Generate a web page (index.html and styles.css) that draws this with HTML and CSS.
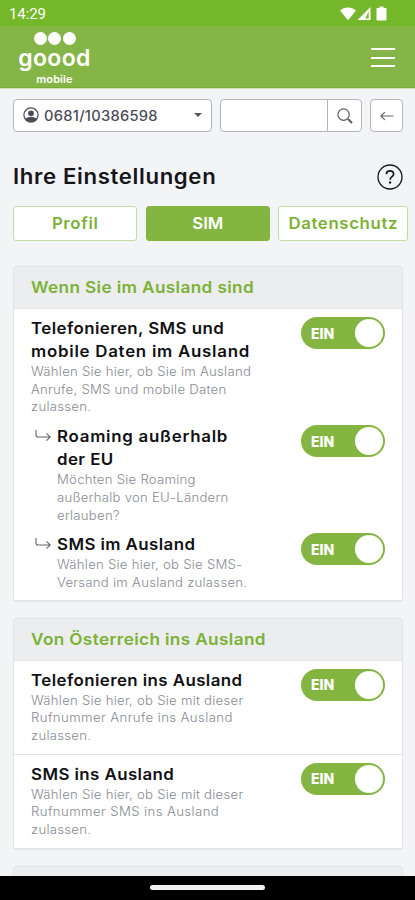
FILE: index.html
```html
<!DOCTYPE html>
<html lang="de">
<head>
<meta charset="utf-8">
<title>goood mobile – Einstellungen</title>
<link rel="stylesheet" href="styles.css">
</head>
<body>
<div class="screen">
  <div class="status">
    <span class="clock">14:29</span>
    <svg class="status-icons" width="48" height="16" viewBox="0 0 48 16" fill="#fff">
      <path d="M0 4.500C4.500.5 11.500.5 16 4.500L8 14.300Z"/>
      <path fill-rule="evenodd" d="M17.500 14 30.500 1v13ZM25.300 12.500h3.400V5.600Z"/>
      <path d="M37.500 2h2V.5h4V2h2a1 1 0 0 1 1 1v10.500a1 1 0 0 1-1 1h-8a1 1 0 0 1-1-1V3a1 1 0 0 1 1-1Z"/>
    </svg>
  </div>
  <header class="header">
    <div class="logo">
      <div class="dots"><i></i><i></i><i></i></div>
      <div class="brand">goood</div>
      <div class="sub">mobile</div>
    </div>
    <div class="menu"><i></i><i></i><i></i></div>
  </header>
  <div class="toolbar">
    <div class="number">
      <svg width="16" height="16" viewBox="0 0 16 16"><circle cx="8" cy="8" r="7.100" fill="none" stroke="#4b4b59" stroke-width="1.200"/><circle cx="8" cy="6.300" r="2.900" fill="#4b4b59"/><path d="M2.300 12.200C3.500 10.500 5.500 10.100 8 10.100s4.500.4 5.700 2.100A7 7 0 0 1 8 15.100a7 7 0 0 1-5.700-2.900Z" fill="#4b4b59"/></svg>
      <span class="msisdn">0681/10386598</span>
      <b class="caret"></b>
    </div>
    <div class="search">
      <div class="field"></div>
      <div class="go"><svg width="16" height="16" viewBox="0 0 16 16" fill="none" stroke="#5c5c66"><circle cx="6.600" cy="6.600" r="5.700" stroke-width="1.200"/><path d="m11 11 4 4" stroke-width="2"/></svg></div>
    </div>
    <div class="back"><svg width="14" height="10" viewBox="0 0 14 10" fill="none" stroke="#66666e" stroke-width="1.200" stroke-linecap="round" stroke-linejoin="round"><path d="M13 5H1M4.600 1.400 1 5l3.600 3.600"/></svg></div>
  </div>
  <div class="heading">
    <h1>Ihre Einstellungen</h1>
    <svg width="26" height="26" viewBox="0 0 26 26" fill="none" stroke="#16161a"><circle cx="13" cy="13" r="12" stroke-width="1.300"/><path d="M9.400 10.100C9.500 7.900 11 6.900 13 6.900c2.100 0 3.600 1.200 3.600 3 0 1.500-.8 2.200-1.900 3-1.200.9-1.600 1.500-1.600 2.900" stroke-width="1.700"/><circle cx="13.100" cy="18.500" r="1.200" fill="#16161a" stroke="none"/></svg>
  </div>
  <nav class="tabs">
    <div class="tab"><span>Profil</span></div>
    <div class="tab active"><span>SIM</span></div>
    <div class="tab privacy"><span>Datenschutz</span></div>
  </nav>
  <section class="card">
    <h2><span>Wenn Sie im Ausland sind</span></h2>
    <div class="group">
      <div class="row">
        <div class="text"><h3>Telefonieren, SMS und<br><span class="wide">mobile Daten im Ausland</span></h3><p>Wählen Sie hier, ob Sie im Ausland<br>Anrufe, SMS und mobile Daten<br>zulassen.</p></div>
        <div class="toggle">EIN<i></i></div>
      </div>
      <div class="row nested">
        <svg class="branch" width="16" height="12" viewBox="0 0 16 12" fill="none" stroke="#66666a" stroke-width="1.100"><path d="M1 0v5q0 2 2 2h12M11.500 3.300 15.200 7l-3.700 3.700"/></svg>
        <div class="text"><h3><span class="wide">Roaming außerhalb</span><br>der EU</h3><p>Möchten Sie Roaming<br>außerhalb von EU-Ländern<br>erlauben?</p></div>
        <div class="toggle">EIN<i></i></div>
      </div>
      <div class="row nested">
        <svg class="branch" width="16" height="12" viewBox="0 0 16 12" fill="none" stroke="#66666a" stroke-width="1.100"><path d="M1 0v5q0 2 2 2h12M11.500 3.300 15.200 7l-3.700 3.700"/></svg>
        <div class="text"><h3>SMS im Ausland</h3><p>Wählen Sie hier, ob Sie SMS-<br>Versand im Ausland zulassen.</p></div>
        <div class="toggle">EIN<i></i></div>
      </div>
    </div>
  </section>
  <section class="card">
    <h2><span>Von Österreich ins Ausland</span></h2>
    <div class="group">
      <div class="row">
        <div class="text"><h3>Telefonieren ins Ausland</h3><p>Wählen Sie hier, ob Sie mit dieser<br><span class="wide">Rufnummer Anrufe ins Ausland</span><br>zulassen.</p></div>
        <div class="toggle">EIN<i></i></div>
      </div>
    </div>
    <div class="group">
      <div class="row">
        <div class="text"><h3>SMS ins Ausland</h3><p>Wählen Sie hier, ob Sie mit dieser<br><span class="wide">Rufnummer SMS ins Ausland</span><br>zulassen.</p></div>
        <div class="toggle">EIN<i></i></div>
      </div>
    </div>
  </section>
  <section class="card"><h2></h2></section>
  <div class="navbar"><i></i></div>
</div>
</body>
</html>
```
FILE: styles.css
```css
* { box-sizing: border-box; }
html, body { margin: 0; }
body { font-family: Inter, "Open Sans", sans-serif; background: #f2f4f6; }
h1, h2, h3, p { margin: 0; }
svg { display: block; flex: none; }
.screen { position: relative; width: 415px; height: 900px; overflow: hidden; background: #f2f4f6; }
.status { height: 26px; padding: 1px 27px 0 9px; display: flex; align-items: center; justify-content: space-between; background: #74b72a; color: #fff; }
.clock { font: 400 15px/24px Roboto, sans-serif; letter-spacing: -0.1px; }
.header { height: 63px; padding: 0 20px 0 18px; display: flex; justify-content: space-between; background: #86b547; border-bottom: 1px solid #cfe3b6; box-shadow: inset 0 -1px #78ae35; }
.logo { width: 73px; padding-top: 6px; color: #fff; text-align: center; }
.dots { display: flex; gap: 1.5px; justify-content: center; }
.dots i { width: 13px; height: 13px; border-radius: 50%; background: #fff; }
.brand { font-size: 23px; font-weight: 600; line-height: 26px; letter-spacing: 0.3px; white-space: nowrap; }
.sub { margin-top: 2px; font-size: 11px; font-weight: 600; line-height: 12px; letter-spacing: 0.1px; }
.menu { width: 24px; padding-top: 22px; display: flex; flex-direction: column; gap: 6.500px; }
.menu i { height: 2px; background: #fff; }
.toolbar { display: flex; padding: 10px 12px 0 13px; height: 43px; }
.number, .search, .back { height: 33px; border: 1px solid #b4b6bd; border-radius: 4px; background: #fff; display: flex; align-items: center; }
.number { width: 200px; padding: 0 9px 1px; font-size: 14px; font-weight: 500; color: #4b4b59; letter-spacing: 0.25px; }
.msisdn { margin-left: 5px; flex: 1; transform: scaleX(1.05); transform-origin: left; }
.caret { border: 4px solid transparent; border-top-color: #55555e; border-bottom: 0; }
.search { width: 142px; margin-left: 8px; }
.field { flex: 1; height: 100%; border-right: 1px solid #b4b6bd; }
.go { width: 33px; display: flex; justify-content: center; }
.back { width: 33px; margin-left: 8px; justify-content: center; }
.heading { height: 74px; padding: 32px 12px 0 13px; display: flex; justify-content: space-between; }
h1 { font-size: 21px; line-height: 26px; font-weight: 600; color: #16161a; letter-spacing: 0.6px; transform: scaleX(1.057); transform-origin: left; }
.tabs { display: flex; gap: 8.500px; padding-left: 13px; height: 35px; }
.tab { width: 124px; border: 1px solid #c3dba4; border-radius: 3px; background: #fff; color: #7db136; font-size: 16px; font-weight: 600; line-height: 33px; text-align: center; letter-spacing: 0.6px; }
.tab span { display: inline-block; transform: scaleX(1.05); }
.tab.active { background: #84b541; border-color: #84b541; color: #fff; letter-spacing: 0; }
.tab.privacy { width: 130px; flex: none; }
.card { margin: 16px 12px 0 13px; border: 1px solid #e2e4e6; border-bottom-width: 2px; border-radius: 3px; background: #fff; }
.tabs + .card { margin-top: 25px; }
h2 { height: 42px; padding: 0 17px; border-bottom: 1px solid #e2e4e6; background: #ebedef; color: #7db136; font-size: 16px; font-weight: 600; line-height: 40px; letter-spacing: 0.35px; white-space: nowrap; }
h2 span { display: inline-block; transform: scaleX(1.073); transform-origin: left; }
.group { padding: 8px 17px 8px; display: flex; flex-direction: column; gap: 9px; }
.group:not(:last-child) { padding-bottom: 9px; }
.group + .group { border-top: 1px solid #e2e4e6; padding-bottom: 9px; }
.row { display: flex; justify-content: space-between; white-space: nowrap; }
.nested { padding-left: 5px; }
.branch { margin: 5px 5px 0 0; }
.nested .branch { margin-left: -1px; margin-right: 6px; }
.text { flex: 1; transform: scaleX(1.055); transform-origin: left; }
h3 { font-size: 16px; line-height: 23px; font-weight: 600; color: #111114; letter-spacing: 0.4px; }
h3 .wide { letter-spacing: 0.7px; }
p { font-size: 12.500px; line-height: 17.700px; font-weight: 300; color: #888b92; letter-spacing: 0.23px; }
p .wide { letter-spacing: 0.37px; }
.toggle { width: 84px; height: 32px; flex: none; padding: 0 2px 0 10px; border-radius: 16px; background: #84b541; color: #fff; font-size: 14px; font-weight: 800; display: flex; align-items: center; justify-content: space-between; }
.toggle i { width: 28px; height: 28px; border-radius: 50%; background: #fff; }
.navbar { position: absolute; left: 0; right: 0; bottom: 0; height: 24px; background: #000; display: flex; justify-content: center; padding-top: 9px; }
.navbar i { width: 115px; height: 5px; border-radius: 3px; background: #f2f2f2; }
```
